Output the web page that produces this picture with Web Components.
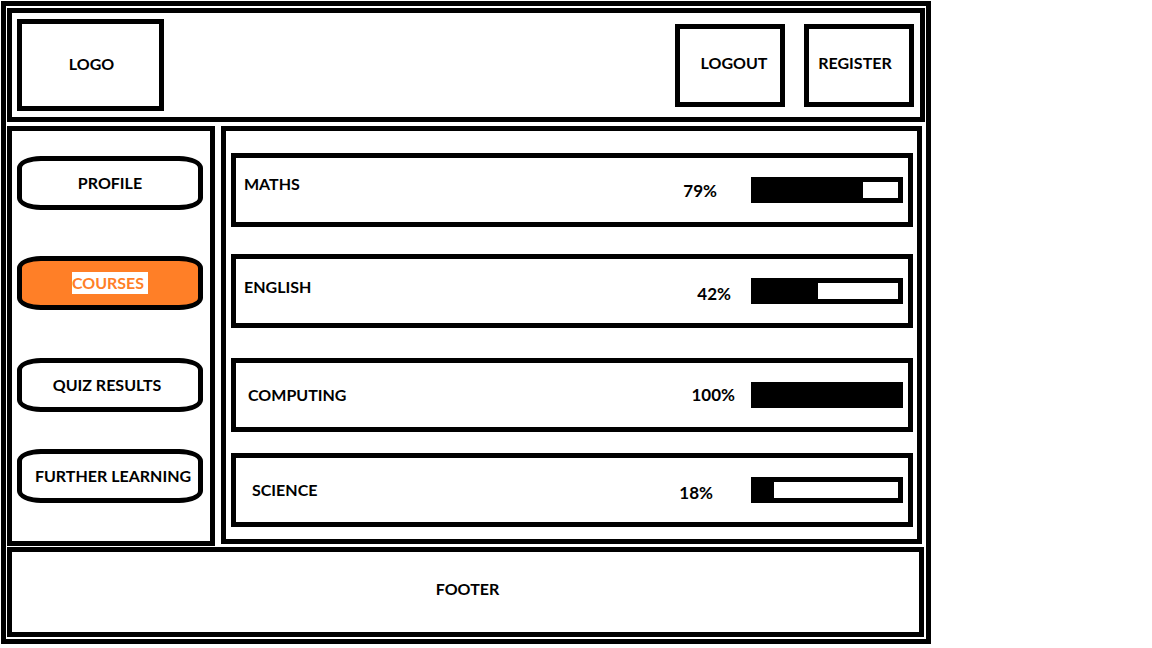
<!DOCTYPE html>
<html lang="en">
<head>
<meta charset="utf-8">
<title>Courses</title>
<style>
  body {
    margin: 1px 221px 0 1px;
    background: #fff;
    color: #000;
    font: bold 16px/22px Lato, "Noto Sans", sans-serif;
  }
</style>
</head>
<body>
<course-app></course-app>
<script>
const define = (name, html, setup) => {
  const template = document.createElement('template');
  template.innerHTML = '<style>*{box-sizing:border-box}:host{box-sizing:border-box}</style>' + html;
  customElements.define(name, class extends HTMLElement {
    constructor() {
      super();
      this.attachShadow({ mode: 'open' }).append(template.content.cloneNode(true));
    }
    connectedCallback() {
      if (setup) setup(this, this.shadowRoot);
    }
  });
};

define('box-button', `
  <style>
    :host { display: block; width: 110px; height: 83px; }
    button { width: 100%; height: 100%; padding: 0 0 4px; background: #fff; border: 5px solid #000; color: inherit; font: inherit; }
    :host([lean="right"]) button { padding-left: 8px; }
    :host([lean="left"]) button { padding-right: 8px; }
  </style>
  <button type="button"><slot></slot></button>
`);

define('site-header', `
  <style>
    :host { display: block; }
    header { display: flex; align-items: center; gap: 19px; min-height: 114px; padding: 0 6px 0 5px; border: 5px solid #000; }
    .logo { display: flex; align-items: center; justify-content: center; width: 147px; height: 92px; margin-right: auto; padding: 0 0 2px 2px; border: 5px solid #000; }
  </style>
  <header>
    <div class="logo">LOGO</div>
    <box-button lean="right">LOGOUT</box-button>
    <box-button lean="left">REGISTER</box-button>
  </header>
`);

define('nav-pill', `
  <style>
    :host { display: block; }
    a { display: flex; align-items: center; justify-content: center; height: 54px; border: 5px solid #000; border-radius: 24px / 12px; color: inherit; text-decoration: none; white-space: nowrap; }
    :host([current]) a { background: #ff7f27; color: #ff7f27; }
    :host([current]) span { padding-right: 4px; background: #fff; }
    :host([lean="right"]) a { padding-left: 6px; }
    :host([lean="left"]) a { padding-right: 6px; }
  </style>
  <a href="#"><span><slot></slot></span></a>
`, (host, root) => {
  if (host.hasAttribute('current')) root.querySelector('a').setAttribute('aria-current', 'page');
});

define('side-nav', `
  <style>
    :host { display: block; }
    nav { display: grid; grid-template-rows: 100px 102px 91px 54px; align-items: start; height: 100%; padding: 25px 7px 38px 5px; border: 5px solid #000; }
  </style>
  <nav>
    <nav-pill>PROFILE</nav-pill>
    <nav-pill current>COURSES</nav-pill>
    <nav-pill lean="left">QUIZ RESULTS</nav-pill>
    <nav-pill lean="right">FURTHER LEARNING</nav-pill>
  </nav>
`);

define('course-card', `
  <style>
    :host { display: block; --lead: 8px; --gap: 20px; --lift: 0px; --drop: 0px; }
    section { display: flex; align-items: center; height: 74px; padding: 0 5px 0 var(--lead); border: 5px solid #000; }
    h2 { flex: 1; margin: 0; padding-bottom: var(--lift); font: inherit; }
    label { margin-right: var(--gap); padding-top: var(--drop); font-size: 17px; }
    progress { appearance: none; -webkit-appearance: none; display: block; width: 152px; height: 26px; border: 5px solid #000; background: #fff; }
    progress::-webkit-progress-bar { background: #fff; }
    progress::-webkit-progress-value { background: #000; }
  </style>
  <section>
    <h2><slot></slot></h2>
    <label for="bar"></label>
    <progress id="bar" max="100"></progress>
  </section>
`, (host, root) => {
  root.querySelector('label').textContent = host.getAttribute('percent') + '%';
  root.querySelector('progress').value = Number(host.getAttribute('fill'));
});

define('course-list', `
  <style>
    :host { display: block; }
    main { display: grid; grid-template-rows: 101px 104px 95px 74px; align-items: start; padding: 22px 4px 12px 5px; border: 5px solid #000; }
    .maths { --lift: 12px; --gap: 34px; --drop: 2px; }
    .english { --lift: 8px; --drop: 6px; }
    .computing { --lead: 12px; --gap: 16px; }
    .science { --lead: 16px; --gap: 38px; --drop: 6px; }
  </style>
  <main>
    <course-card class="maths" percent="79" fill="75">MATHS</course-card>
    <course-card class="english" percent="42" fill="44">ENGLISH</course-card>
    <course-card class="computing" percent="100" fill="100">COMPUTING</course-card>
    <course-card class="science" percent="18" fill="13">SCIENCE</course-card>
  </main>
`);

define('site-footer', `
  <style>
    :host { display: block; }
    footer { display: flex; align-items: center; justify-content: center; min-height: 90px; padding: 0 0 6px 4px; border: 5px solid #000; }
  </style>
  <footer>FOOTER</footer>
`);

define('course-app', `
  <style>
    :host { display: block; padding: 2px 1px; border: 5px solid #000; }
    .columns { display: grid; grid-template-columns: 208px 1fr; gap: 6px; margin: 4px 3px 1px 0; }
    side-nav { height: 420px; }
    course-list { align-self: start; }
    site-footer { margin-right: 1px; }
  </style>
  <site-header></site-header>
  <div class="columns">
    <side-nav></side-nav>
    <course-list></course-list>
  </div>
  <site-footer></site-footer>
`);
</script>
</body>
</html>
